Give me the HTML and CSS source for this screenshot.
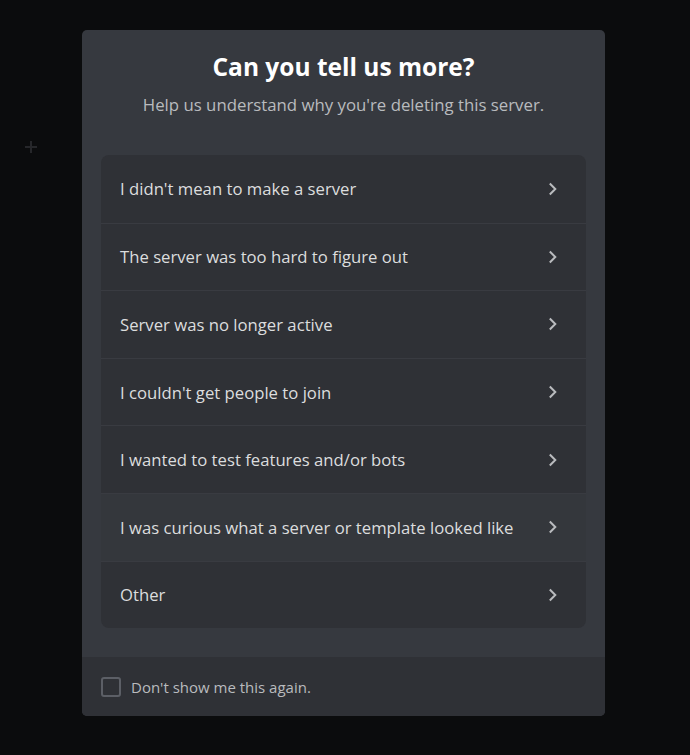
FILE: index.html
```html
<!DOCTYPE html>
<html lang="en">
<head>
<meta charset="utf-8">
<title>Can you tell us more?</title>
<link rel="stylesheet" href="styles.css">
</head>
<body>
<div class="app">
  <span class="bg-plus" aria-hidden="true">
    <svg width="12" height="12" viewBox="0 0 12 12"><path d="M6 0v12M0 6h12" stroke="currentColor" stroke-width="2"/></svg>
  </span>
  <div class="modal" role="dialog">
    <div class="modal-header">
      <h1 class="title">Can you tell us more?</h1>
      <p class="subtitle">Help us understand why you're deleting this server.</p>
    </div>
    <div class="modal-body">
      <ul class="reasons">
        <li class="reason"><span>I didn't mean to make a server</span><svg class="chev" width="10" height="14" viewBox="0 0 10 14"><path d="M1.8 1.5L7.3 7L1.8 12.5" fill="none" stroke="currentColor" stroke-width="2"/></svg></li>
        <li class="reason"><span>The server was too hard to figure out</span><svg class="chev" width="10" height="14" viewBox="0 0 10 14"><path d="M1.8 1.5L7.3 7L1.8 12.5" fill="none" stroke="currentColor" stroke-width="2"/></svg></li>
        <li class="reason"><span>Server was no longer active</span><svg class="chev" width="10" height="14" viewBox="0 0 10 14"><path d="M1.8 1.5L7.3 7L1.8 12.5" fill="none" stroke="currentColor" stroke-width="2"/></svg></li>
        <li class="reason"><span>I couldn't get people to join</span><svg class="chev" width="10" height="14" viewBox="0 0 10 14"><path d="M1.8 1.5L7.3 7L1.8 12.5" fill="none" stroke="currentColor" stroke-width="2"/></svg></li>
        <li class="reason"><span>I wanted to test features and/or bots</span><svg class="chev" width="10" height="14" viewBox="0 0 10 14"><path d="M1.8 1.5L7.3 7L1.8 12.5" fill="none" stroke="currentColor" stroke-width="2"/></svg></li>
        <li class="reason is-hover"><span>I was curious what a server or template looked like</span><svg class="chev" width="10" height="14" viewBox="0 0 10 14"><path d="M1.8 1.5L7.3 7L1.8 12.5" fill="none" stroke="currentColor" stroke-width="2"/></svg></li>
        <li class="reason"><span>Other</span><svg class="chev" width="10" height="14" viewBox="0 0 10 14"><path d="M1.8 1.5L7.3 7L1.8 12.5" fill="none" stroke="currentColor" stroke-width="2"/></svg></li>
      </ul>
    </div>
    <div class="modal-footer">
      <label class="check">
        <span class="box"></span>
        <span class="check-label">Don't show me this again.</span>
      </label>
    </div>
  </div>
</div>
</body>
</html>
```
FILE: styles.css
```css
html, body {
  margin: 0;
  padding: 0;
  background: #0b0c0d;
}
body {
  font-family: "Open Sans", "Noto Sans", sans-serif;
  width: 690px;
  height: 755px;
  overflow: hidden;
}
.app {
  position: relative;
  height: 755px;
  padding: 30px 0 0 82px;
  box-sizing: border-box;
}
.bg-plus {
  position: absolute;
  left: 25px;
  top: 141px;
  color: #26272a;
  display: block;
  line-height: 0;
}
.modal {
  width: 523px;
  background: #36393f;
  border-radius: 5px;
  overflow: hidden;
}
.modal-header {
  padding: 22px 16px 0;
  text-align: center;
}
.title {
  margin: 0;
  font-size: 24.5px;
  line-height: 30px;
  font-weight: 700;
  color: #ffffff;
}
.subtitle {
  margin: 13px 0 0;
  font-size: 16.8px;
  line-height: 20px;
  color: #b9bbbe;
}
.modal-body {
  padding: 40px 19px 29px;
}
.reasons {
  list-style: none;
  margin: 0;
  padding: 0;
  background: #2f3136;
  border-radius: 8px;
  overflow: hidden;
}
.reason {
  display: flex;
  align-items: center;
  justify-content: space-between;
  height: 67.6px;
  box-sizing: border-box;
  padding: 0 28px 0 19px;
  font-size: 16.7px;
  color: #dcddde;
}
.reason + .reason {
  border-top: 1px solid #393b41;
}
.reason.is-hover {
  background: #34373c;
}
.chev {
  color: #b9bbbe;
  flex: none;
}
.modal-footer {
  background: #2f3136;
  height: 59px;
  padding: 0 19px;
  display: flex;
  align-items: center;
}
.check {
  display: flex;
  align-items: center;
  gap: 10px;
}
.box {
  width: 20px;
  height: 20px;
  box-sizing: border-box;
  border: 2px solid #5c5f66;
  border-radius: 3px;
}
.check-label {
  font-size: 15px;
  color: #b9bbbe;
}
```
